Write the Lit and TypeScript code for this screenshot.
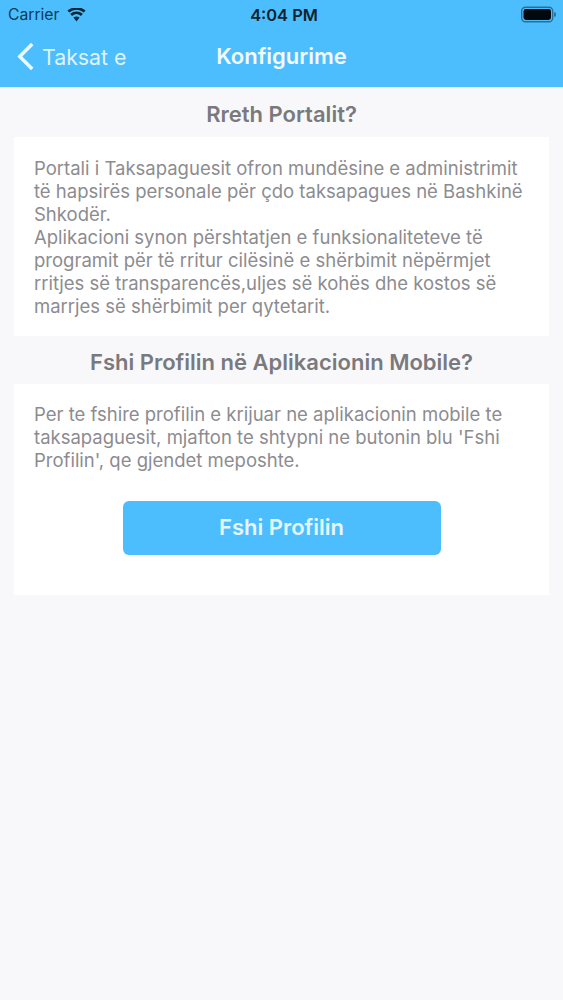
import { LitElement, html, css } from "lit";
import { customElement } from "lit/decorators.js";

@customElement("app-root")
export class AppRoot extends LitElement {
  static styles = css`
    :host { display: block; width: 563px; height: 1000px; background: #f8f8fb; font-family: "Inter", "Liberation Sans", sans-serif; overflow: hidden; }
    .head { background: #4dbefd; height: 88px; border-bottom: 1px solid #d6eefc; box-sizing: border-box; display: flex; flex-direction: column; }
    .status { height: 29px; display: grid; grid-template-columns: 1fr auto 1fr; align-items: center; padding: 0 3px 0 8px; color: #0a3a58; font-size: 15.7px; }
    .left { display: flex; align-items: center; gap: 8px; }
    .time { font-weight: 600; font-size: 16.4px; color: #10222e; }
    .right { display: flex; justify-content: flex-end; padding-right: 4px; }
    .nav { flex: 1; position: relative; display: flex; align-items: center; justify-content: center; color: #fff; padding-bottom: 4px; }
    .title { font-size: 22px; font-weight: 600; color: #f2faff; }
    .back { position: absolute; left: 16px; top: 13px; display: flex; align-items: center; gap: 7px; font-size: 21.3px; color: #dff3ff; }
    .heading { text-align: center; font-size: 22px; font-weight: 600; color: #7a7a7e; margin: 0; }
    .h1 { padding-top: 13px; height: 49px; box-sizing: border-box; }
    .h2 { padding-top: 13px; height: 48px; box-sizing: border-box; }
    .card { background: #fff; margin: 0 14px; padding: 20px 20px 0; box-sizing: border-box; color: #8c8c90; font-size: 18.5px; line-height: 23px; white-space: nowrap; }
    .c1 { height: 199px; }
    .c2 { height: 211px; padding-top: 19px; }
    .card p { margin: 0; }
    .btn { display: flex; width: 318px; height: 54px; margin: 29px auto 0; padding-bottom: 2px; box-sizing: border-box; align-items: center; justify-content: center; background: #4dbefd; color: #e4f5ff; border-radius: 6px; font-size: 22px; font-weight: 600; }
  `;
  render() {
    return html`
      <div class="head">
        <div class="status">
          <div class="left"><span>Carrier</span>
            <svg width="19" height="14" viewBox="0 0 18 14"><path d="M9 13.5 L5.9 9.6 A5 5 0 0 1 12.1 9.6 Z M4.5 7.9 L2.7 5.7 A10 10 0 0 1 15.3 5.7 L13.5 7.9 A7.2 7.2 0 0 0 4.5 7.9 Z M1.7 4.4 L0 2.4 A14.5 14.5 0 0 1 18 2.4 L16.3 4.4 A11.8 11.8 0 0 0 1.7 4.4 Z" fill="#07283c"/></svg>
          </div>
          <div class="time">4:04 PM</div>
          <div class="right">
            <svg width="35" height="17" viewBox="0 0 35 17"><rect x="0.7" y="1.2" width="31" height="14.6" rx="3.8" fill="none" stroke="#2a6e98" stroke-width="1.4"/><rect x="2.5" y="3" width="27.5" height="11" rx="2.4" fill="#02090e"/><rect x="33" y="6.3" width="1.8" height="4.4" rx="0.9" fill="#2a6e98"/></svg>
          </div>
        </div>
        <div class="nav">
          <div class="back">
            <svg width="19" height="29" viewBox="0 0 18 28"><path d="M15.5 2 L3.5 14 L15.5 26" fill="none" stroke="#eef9ff" stroke-width="3.4"/></svg>
            <span>Taksat e</span>
          </div>
          <div class="title">Konfigurime</div>
        </div>
      </div>
      <div class="heading h1">Rreth Portalit?</div>
      <div class="card c1"><p>Portali i Taksapaguesit ofron mundësine e administrimit<br>të hapsirës personale për çdo taksapagues në Bashkinë<br>Shkodër.<br>Aplikacioni synon përshtatjen e funksionaliteteve të<br>programit për të rritur cilësinë e shërbimit nëpërmjet<br>rritjes së transparencës,uljes së kohës dhe kostos së<br>marrjes së shërbimit per qytetarit.</p></div>
      <div class="heading h2">Fshi Profilin në Aplikacionin Mobile?</div>
      <div class="card c2"><p>Per te fshire profilin e krijuar ne aplikacionin mobile te<br>taksapaguesit, mjafton te shtypni ne butonin blu 'Fshi<br>Profilin', qe gjendet meposhte.</p>
        <div class="btn">Fshi Profilin</div>
      </div>
    `;
  }
}
